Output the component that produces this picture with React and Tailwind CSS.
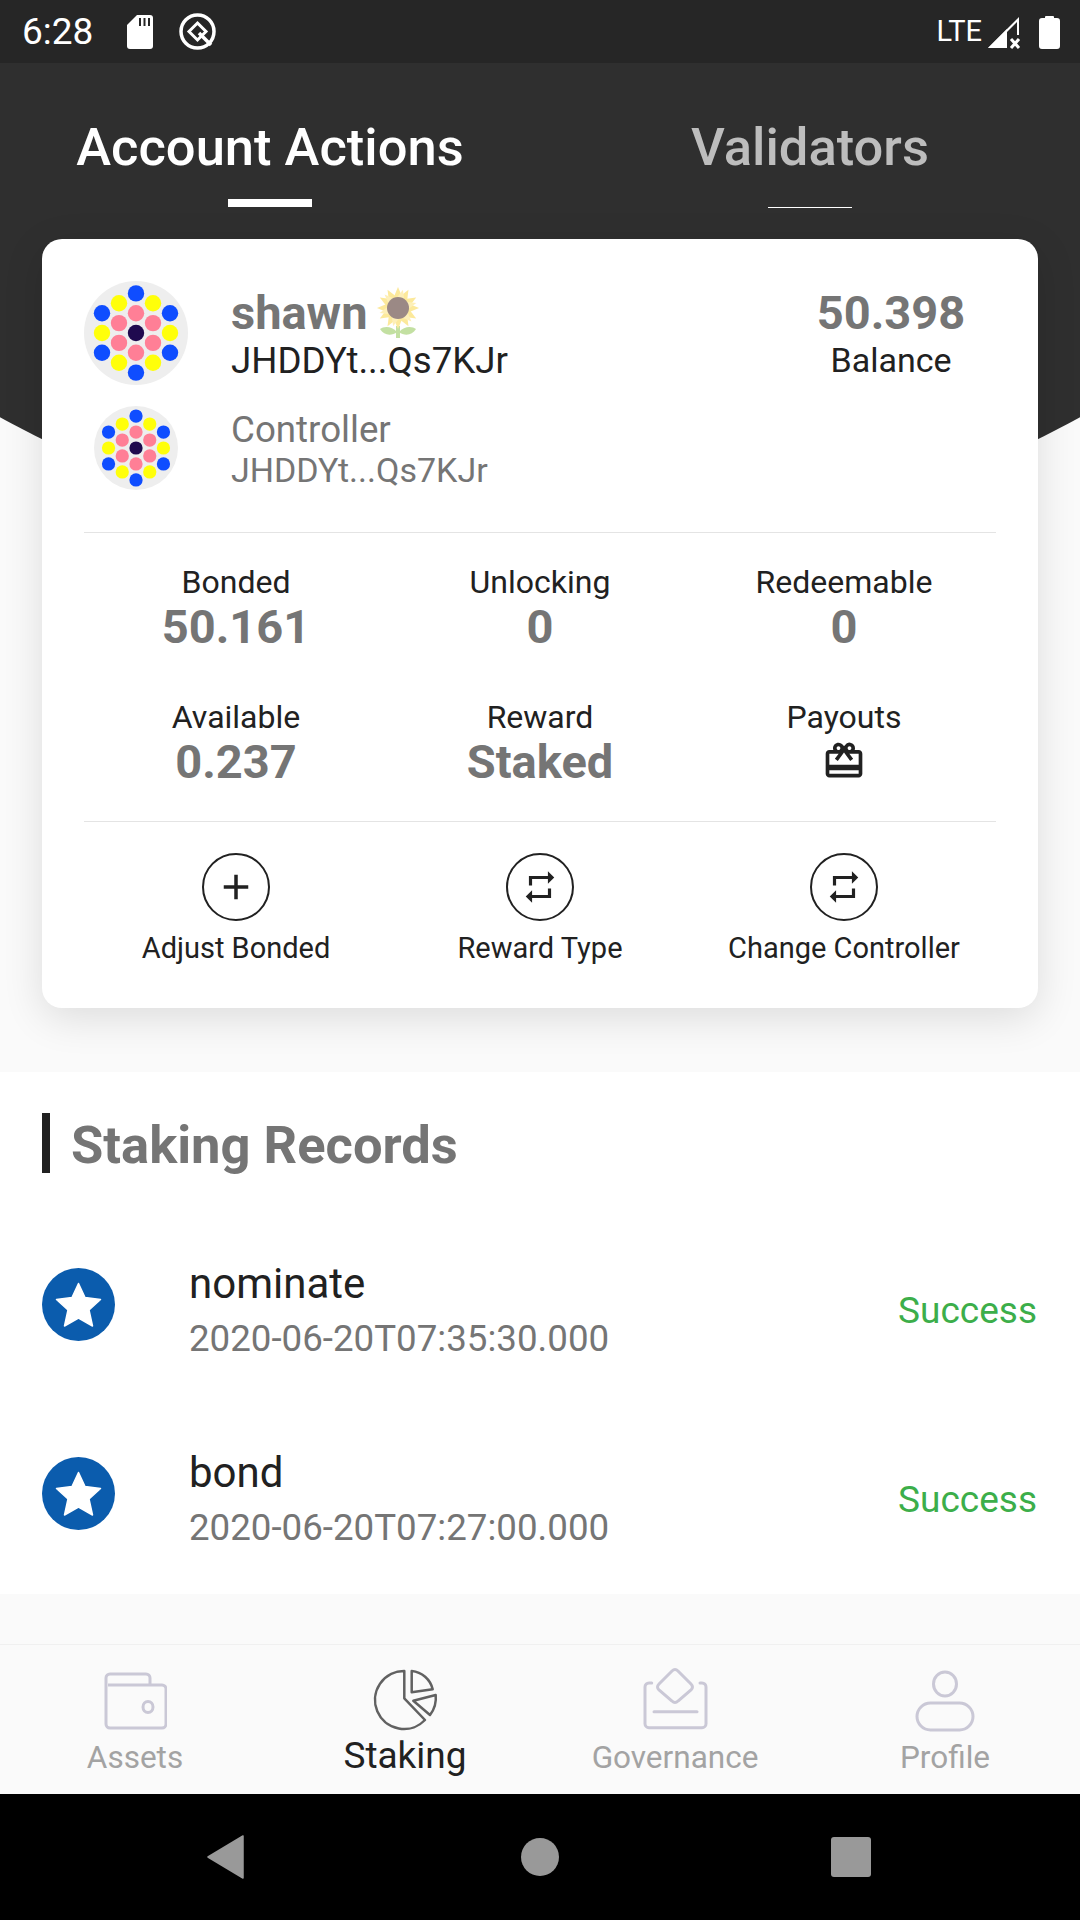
import { MdAdd, MdRepeat, MdOutlineCardGiftcard } from 'react-icons/md';

const A = 17;
const B = 9.9;
const DOTS = [
    [0, -4, '#0f4dff'], [-1, -3, '#ffff0a'], [1, -3, '#ffff0a'], [-2, -2, '#0f4dff'], [2, -2, '#0f4dff'],
    [-2, 0, '#ffff0a'], [2, 0, '#ffff0a'], [-2, 2, '#0f4dff'], [2, 2, '#0f4dff'], [-1, 3, '#ffff0a'],
    [1, 3, '#ffff0a'], [0, 4, '#0f4dff'], [0, -2, '#ff7f96'], [-1, -1, '#ff7f96'], [1, -1, '#ff7f96'],
    [-1, 1, '#ff7f96'], [1, 1, '#ff7f96'], [0, 2, '#ff7f96'], [0, 0, '#1f0a4f'],
];

const Identicon = ({ size }) => (
    <svg width={size} height={size} viewBox="-52 -52 104 104">
        <circle r="52" fill="#eeeeee" />
        {DOTS.map(([x, y, c], i) => (
            <circle key={i} cx={x * A} cy={y * B} r="8.2" fill={c} />
        ))}
    </svg>
);

const Sunflower = () => (
    <svg width="46" height="54" viewBox="-23 -24 46 54" className="ml-[8px] mt-[-4px] opacity-60">
        <path d="M0 18V30" stroke="#9ccc65" strokeWidth="4" />
        <path d="M-1 24C-6 18-14 18-18 21C-14 28-6 28-1 24Z" fill="#9ccc65" />
        <path d="M1 24C6 18 14 18 18 21C14 28 6 28 1 24Z" fill="#9ccc65" />
        {[0, 30, 60, 90, 120, 150, 180, 210, 240, 270, 300, 330].map((r) => (
            <path key={r} d="M0 -21L5 -9H-5Z" fill="#fbdc5a" transform={`rotate(${r})`} />
        ))}
        {[15, 75, 135, 195, 255, 315].map((r) => (
            <path key={r} d="M0 -19L4 -9H-4Z" fill="#fde68a" transform={`rotate(${r})`} />
        ))}
        <circle r="11" fill="#5a3c35" />
    </svg>
);

const Star = () => (
    <svg width="73" height="73" viewBox="0 0 73 73" className="shrink-0 mt-[2px]">
        <circle cx="36.5" cy="36.5" r="36.5" fill="#0b5cad" />
        <polygon points="36.5,15.500 43,29.500 58.500,31.500 47,42 50.500,58 36.500,50 22.500,58 26,42 14.500,31.500 30,29.500" fill="#ffffff" stroke="#ffffff" strokeWidth="1.500" strokeLinejoin="round" />
    </svg>
);

const Stat = ({ label, value, children }) => (
    <div className="flex flex-col items-center">
        <div className="text-[32px] leading-[36px] text-[#212121]">{label}</div>
        {value && <div className="text-[47px] leading-[54px] font-bold text-[#757575]">{value}</div>}
        {children}
    </div>
);

const Action = ({ label, children }) => (
    <div className="flex flex-col items-center">
        <div className="w-[68px] h-[68px] rounded-full border-2 border-[#212121] flex items-center justify-center text-[#212121]">
            {children}
        </div>
        <div className="mt-[7px] text-[29px] leading-[40px] text-[#212121]">{label}</div>
    </div>
);

const Record = ({ title, date }) => (
    <div className="flex items-center h-[189px] pl-[42px] pr-[43px]">
        <Star />
        <div className="ml-[74px] flex-1 pt-[18px]">
            <div className="text-[42px] leading-[52px] text-[#212121]">{title}</div>
            <div className="text-[36.7px] leading-[58px] text-[#757575]">{date}</div>
        </div>
        <div className="pt-[14px] text-[37px] text-[#3cae4a]">Success</div>
    </div>
);

const NavItem = ({ label, active, children }) => (
    <div className="flex-1 flex flex-col items-center">
        <div className="h-[64px] flex items-center justify-center">{children}</div>
        <div className={active ? 'mt-[1px] text-[37px] leading-[44px] text-[#212121]' : 'mt-[3px] text-[31.5px] leading-[44px] text-[#a3a3a3]'}>
            {label}
        </div>
    </div>
);

export default function App() {
    return (
        <div className="w-[1080px] h-[1920px] flex flex-col overflow-hidden bg-[#fafafa] font-['Roboto',sans-serif]">
            {/* status bar */}
            <div className="h-[63px] shrink-0 bg-[#262626] flex items-center justify-between pl-[22px] pr-[20px] text-white z-10">
                <div className="flex items-center">
                    <span className="text-[37px] leading-none">6:28</span>
                    <svg width="26" height="34" viewBox="0 0 26 34" className="ml-[34px]">
                        <path d="M10 0H23a3 3 0 0 1 3 3V31a3 3 0 0 1-3 3H3a3 3 0 0 1-3-3V10Z" fill="#fff" />
                        <path d="M12 3h2v8h-2zM16.500 3h2v8h-2zM21 3h2v8h-2z" fill="#262626" />
                    </svg>
                    <svg width="37" height="37" viewBox="0 0 37 37" className="ml-[26px]">
                        <circle cx="18.500" cy="18.500" r="16.500" fill="none" stroke="#fff" strokeWidth="3.500" />
                        <path d="M18.500 10L27 18.500L18.500 27L10 18.500Z" fill="none" stroke="#fff" strokeWidth="3" />
                        <path d="M20 20L32 32" stroke="#fff" strokeWidth="3.500" />
                    </svg>
                </div>
                <div className="flex items-center">
                    <span className="text-[29px] leading-none">LTE</span>
                    <svg width="34" height="34" viewBox="0 0 34 34" className="ml-[5px]">
                        <path d="M1 33L32 2V20H30V7L5 32Z" fill="#fff" />
                        <path d="M1 33L20 14V33Z" fill="#fff" />
                        <path d="M24 24L32 33M32 24L24 33" stroke="#fff" strokeWidth="3" />
                    </svg>
                    <svg width="21" height="34" viewBox="0 0 21 34" className="ml-[18px]">
                        <path d="M6 3V2a1 1 0 0 1 1-1h7a1 1 0 0 1 1 1v1h3a3 3 0 0 1 3 3V31a3 3 0 0 1-3 3H3a3 3 0 0 1-3-3V6a3 3 0 0 1 3-3Z" fill="#fff" />
                    </svg>
                </div>
            </div>

            <div className="relative flex-1 flex flex-col overflow-hidden">
                {/* curved dark header */}
                <div className="absolute left-[-580px] top-[-1747px] w-[2240px] h-[2240px] rounded-full bg-[#2f2f2f]" />

                {/* tabs */}
                <div className="relative h-[176px] shrink-0 flex">
                    <div className="flex-1 flex flex-col items-center">
                        <div className="mt-[51px] text-[52.5px] leading-[66px] font-medium text-white">Account Actions</div>
                        <div className="mt-[19px] w-[84px] h-[8px] bg-white" />
                    </div>
                    <div className="flex-1 flex flex-col items-center">
                        <div className="mt-[51px] text-[52.5px] leading-[66px] font-medium text-[#bdbdbd]">Validators</div>
                        <div className="mt-[27px] w-[84px] h-px bg-white" />
                    </div>
                </div>

                {/* account card */}
                <div className="relative mx-[42px] h-[769px] shrink-0 rounded-[20px] bg-white px-[42px] shadow-[0_10px_40px_rgba(0,0,0,0.12)]">
                    <div className="flex items-start pt-[42px]">
                        <Identicon size={104} />
                        <div className="ml-[43px] flex-1 pt-[5px]">
                            <div className="flex items-center h-[54px]">
                                <span className="text-[47px] leading-[54px] font-bold text-[#757575]">shawn</span>
                                <Sunflower />
                            </div>
                            <div className="text-[36.7px] leading-[42px] text-[#212121]">JHDDYt...Qs7KJr</div>
                        </div>
                        <div className="w-[212px] mr-[-1px] pt-[5px] flex flex-col items-center">
                            <div className="text-[47px] leading-[54px] font-bold text-[#757575]">50.398</div>
                            <div className="text-[34px] leading-[40px] text-[#212121]">Balance</div>
                        </div>
                    </div>
                    <div className="flex items-center mt-[21px]">
                        <div className="ml-[10px]">
                            <Identicon size={84} />
                        </div>
                        <div className="ml-[53px]">
                            <div className="text-[36.7px] leading-[44px] text-[#757575]">Controller</div>
                            <div className="text-[34px] leading-[36px] text-[#757575]">JHDDYt...Qs7KJr</div>
                        </div>
                    </div>

                    <div className="mt-[42px] h-px bg-[#e4e4e4]" />

                    <div className="grid grid-cols-3 content-start gap-y-[45px] pt-[31px] h-[288px]">
                        <Stat label="Bonded" value="50.161" />
                        <Stat label="Unlocking" value="0" />
                        <Stat label="Redeemable" value="0" />
                        <Stat label="Available" value="0.237" />
                        <Stat label="Reward" value="Staked" />
                        <Stat label="Payouts">
                            <MdOutlineCardGiftcard size={44} color="#212121" className="mt-[4px]" />
                        </Stat>
                    </div>

                    <div className="h-px bg-[#e4e4e4]" />

                    <div className="grid grid-cols-3 pt-[31px]">
                        <Action label="Adjust Bonded"><MdAdd size={42} /></Action>
                        <Action label="Reward Type"><MdRepeat size={38} /></Action>
                        <Action label="Change Controller"><MdRepeat size={38} /></Action>
                    </div>
                </div>

                {/* staking records */}
                <div className="relative mt-[64px] h-[522px] shrink-0 bg-white">
                    <div className="flex items-start pt-[41px] px-[42px]">
                        <div className="w-[8px] h-[60px] bg-[#212121]" />
                        <div className="ml-[21px] mt-[2px] text-[52.5px] leading-[60px] font-bold text-[#757575]">Staking Records</div>
                    </div>
                    <div className="pt-[34px]">
                        <Record title="nominate" date="2020-06-20T07:35:30.000" />
                        <Record title="bond" date="2020-06-20T07:27:00.000" />
                    </div>
                </div>
            </div>

            {/* bottom tabs */}
            <div className="h-[150px] shrink-0 flex pt-[24px] bg-[#fafafa] border-t border-[#f0f0f0]">
                <NavItem label="Assets">
                    <svg width="64" height="58" viewBox="0 0 64 58" fill="none" stroke="#cac8d6" strokeWidth="3">
                        <path d="M3 14V6a4 4 0 0 1 4-4H43a4 4 0 0 1 4 4V13M3 12V52a4 4 0 0 0 4 4H59a4 4 0 0 0 4-4V17a4 4 0 0 0-4-4H5" />
                        <ellipse cx="45" cy="35" rx="5" ry="5.500" />
                    </svg>
                </NavItem>
                <NavItem label="Staking" active>
                    <svg width="64" height="62" viewBox="0 0 64 62" fill="none" stroke="#616161" strokeWidth="2.500" strokeLinejoin="round" className="overflow-visible">
                        <path d="M31.300 1A29 29 0 1 0 52 50L31.300 28.300Z" />
                        <path d="M38.700 1A24 24 0 0 1 59.700 19.300L38.700 22.300Z" />
                        <path d="M40.300 30.700L62.700 25A28 28 0 0 1 57 45Z" />
                    </svg>
                </NavItem>
                <NavItem label="Governance">
                    <svg width="64" height="62" viewBox="0 0 64 62" fill="none" stroke="#cac8d6" strokeWidth="3" strokeLinecap="round" className="overflow-visible">
                        <path d="M29 1Q32-2 35 1L48 14Q51 17 48 20L35 31Q32 34 29 31L16 20Q13 17 16 14Z" />
                        <path d="M8.700 13H6a4 4 0 0 0-4 4V53.700a4 4 0 0 0 4 4H59a4 4 0 0 0 4-4V17a4 4 0 0 0-4-4H57" />
                        <path d="M11 41.700H54" />
                    </svg>
                </NavItem>
                <NavItem label="Profile">
                    <svg width="60" height="62" viewBox="0 0 60 62" fill="none" stroke="#cac8d6" strokeWidth="3">
                        <ellipse cx="30" cy="14" rx="11.500" ry="12" />
                        <rect x="2" y="33" width="56" height="27" rx="13.500" />
                    </svg>
                </NavItem>
            </div>

            {/* android nav */}
            <div className="h-[126px] shrink-0 bg-black flex items-center justify-between pl-[207px] pr-[209px]">
                <svg width="37" height="44" viewBox="0 0 37 44">
                    <path d="M36 1V43L1 22Z" fill="#999999" stroke="#999999" strokeWidth="1.500" strokeLinejoin="round" />
                </svg>
                <div className="ml-[5px] w-[38px] h-[38px] rounded-full bg-[#999999]" />
                <div className="w-[40px] h-[40px] rounded-[3px] bg-[#999999]" />
            </div>
        </div>
    );
}
